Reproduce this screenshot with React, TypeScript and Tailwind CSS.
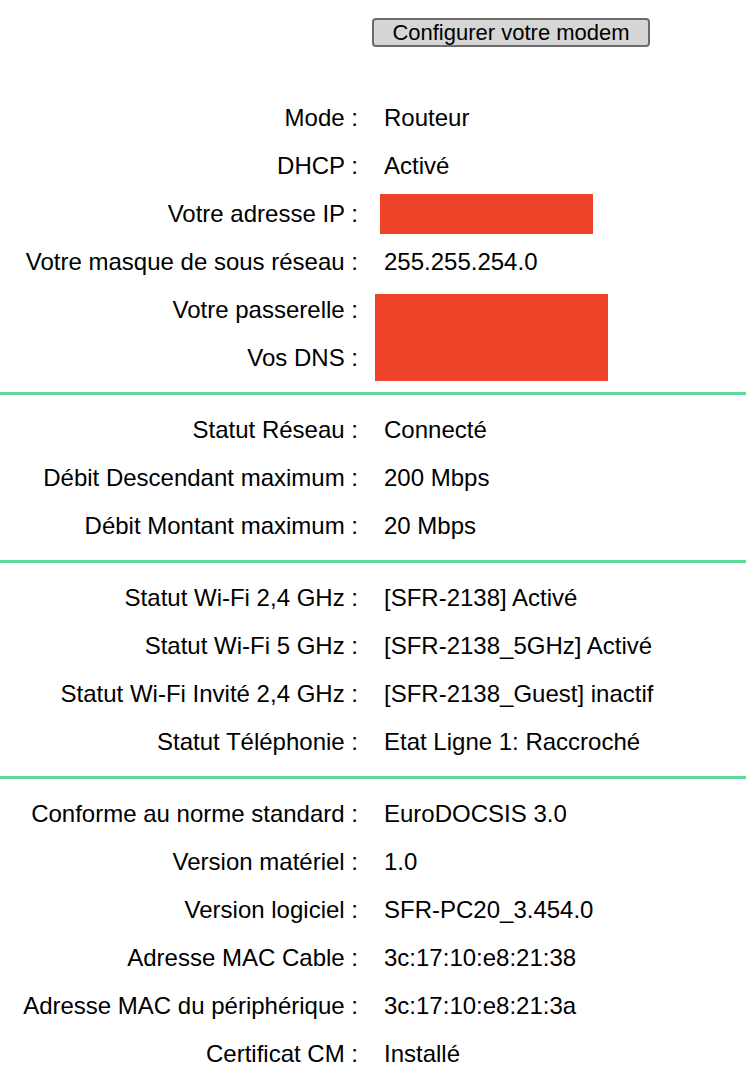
const Sep = () => <div className="mt-[10px] mb-[11px] h-[3px] bg-[#5dd898]" />;

const Row = ({ label, value }: { label: string; value: string }) => (
  <>
    <div className="col-start-1 text-right">{label} :</div>
    <div className="col-start-2">{value}</div>
  </>
);

const grid = 'grid grid-cols-[358px_1fr] auto-rows-[48px] items-center gap-x-[26px]';

export default function App() {
  return (
    <div
      className="w-[746px] min-h-screen bg-white text-black text-[24px]"
      style={{ fontFamily: '"Liberation Sans", Arial, sans-serif' }}
    >
      <div className="flex pt-[18px] pl-[372px]">
        <button className="h-[29px] w-[278px] rounded-[4px] border-2 border-[#6b6b6b] bg-[#d6d6d6] text-[22px] leading-none text-black">
          Configurer votre modem
        </button>
      </div>

      <div className={`${grid} mt-[47px]`}>
        <Row label="Mode" value="Routeur" />
        <Row label="DHCP" value="Activé" />
        <div className="col-start-1 text-right">Votre adresse IP :</div>
        <div className="col-start-2 -ml-[4px] h-[40px] w-[213px] bg-[#ee4229]" />
        <Row label="Votre masque de sous réseau" value="255.255.254.0" />
        <div className="col-start-1 text-right">Votre passerelle :</div>
        <div className="col-start-2 row-span-2 -ml-[9px] mt-[8px] mb-[1px] w-[233px] self-stretch bg-[#ee4229]" />
        <div className="col-start-1 text-right">Vos DNS :</div>
      </div>

      <Sep />

      <div className={grid}>
        <Row label="Statut Réseau" value="Connecté" />
        <Row label="Débit Descendant maximum" value="200 Mbps" />
        <Row label="Débit Montant maximum" value="20 Mbps" />
      </div>

      <Sep />

      <div className={grid}>
        <Row label="Statut Wi-Fi 2,4 GHz" value="[SFR-2138] Activé" />
        <Row label="Statut Wi-Fi 5 GHz" value="[SFR-2138_5GHz] Activé" />
        <Row label="Statut Wi-Fi Invité 2,4 GHz" value="[SFR-2138_Guest] inactif" />
        <Row label="Statut Téléphonie" value="Etat Ligne 1: Raccroché" />
      </div>

      <Sep />

      <div className={grid}>
        <Row label="Conforme au norme standard" value="EuroDOCSIS 3.0" />
        <Row label="Version matériel" value="1.0" />
        <Row label="Version logiciel" value="SFR-PC20_3.454.0" />
        <Row label="Adresse MAC Cable" value="3c:17:10:e8:21:38" />
        <Row label="Adresse MAC du périphérique" value="3c:17:10:e8:21:3a" />
        <Row label="Certificat CM" value="Installé" />
      </div>
    </div>
  );
}
